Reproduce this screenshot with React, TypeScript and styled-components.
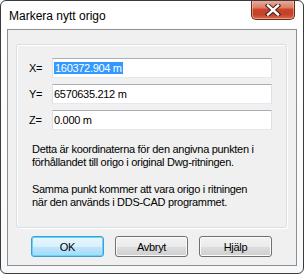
import React from "react"
import styled, { createGlobalStyle } from "styled-components"

const GlobalStyle = createGlobalStyle`
    html, body {
        margin: 0;
        padding: 0;
        background: #ffffff;
    }
    body {
        font-family: "Liberation Sans", Arial, sans-serif;
    }
`

const App = () => {
    return <>
        <GlobalStyle />
        <Window>
            <TitleBar>
                <Title>Markera nytt origo</Title>
                <CloseButton>
                    <svg width="16" height="12" viewBox="0 0 16 12">
                        <path d="M3 1.5 L13 10.5 M13 1.5 L3 10.5" stroke="#4a1c14" strokeWidth="4.4" strokeLinecap="square" fill="none" />
                        <path d="M3 1.5 L13 10.5 M13 1.5 L3 10.5" stroke="#ffffff" strokeWidth="2.4" strokeLinecap="square" fill="none" />
                    </svg>
                </CloseButton>
            </TitleBar>
            <Client>
                <GroupBox>
                    <Fields>
                        <FieldLabel>X=</FieldLabel>
                        <TextBox><Selected>160372.904 m</Selected></TextBox>
                        <FieldLabel>Y=</FieldLabel>
                        <TextBox>6570635.212 m</TextBox>
                        <FieldLabel>Z=</FieldLabel>
                        <TextBox>0.000 m</TextBox>
                    </Fields>
                    <Info>
                        Detta är koordinaterna för den angivna punkten i<br />
                        förhållandet till origo i original Dwg-ritningen.
                    </Info>
                    <Info>
                        Samma punkt kommer att vara origo i ritningen<br />
                        när den används i DDS-CAD programmet.
                    </Info>
                </GroupBox>
                <ButtonRow>
                    <DialogButton $isDefault>OK</DialogButton>
                    <DialogButton>Avbryt</DialogButton>
                    <DialogButton>Hjälp</DialogButton>
                </ButtonRow>
            </Client>
        </Window>
    </>
}

export default App

const Window = styled.div`
    width: 304px;
    height: 274px;
    box-sizing: border-box;
    border: 1px solid #3b3b3b;
    border-radius: 6px;
    background: linear-gradient(#ffffff, #f7f8fa);
    display: flex;
    flex-direction: column;
    overflow: hidden;
`

const TitleBar = styled.div`
    height: 28px;
    display: flex;
    align-items: flex-start;
    justify-content: space-between;
    padding: 0 8px 0 8px;
`

const Title = styled.div`
    font-family: "Liberation Sans", Arial, sans-serif;
    font-size: 12px;
    color: #000000;
    margin-top: 8px;
`

const CloseButton = styled.div`
    width: 42px;
    height: 19px;
    margin-top: -1px;
    border: 1px solid #6b2a1c;
    border-top: none;
    border-radius: 0 0 5px 5px;
    background: linear-gradient(#eab2a4 0%, #dc7d66 40%, #c9452c 50%, #c34128 75%, #d66c50 100%);
    box-shadow: inset 0 0 0 1px rgba(255, 210, 195, 0.5);
    display: flex;
    align-items: center;
    justify-content: center;
`

const Client = styled.div`
    flex: 1;
    margin: 0 6px 7px 6px;
    border: 1px solid #8e8f8f;
    background: #f0f0f0;
    padding: 14px 9px 0 8px;
    display: flex;
    flex-direction: column;
    letter-spacing: -0.3px;
`

const GroupBox = styled.div`
    height: 184px;
    box-sizing: border-box;
    border: 1px solid #d5dfe5;
    border-radius: 3px;
    box-shadow: 1px 1px 0 #ffffff, inset 1px 1px 0 #ffffff;
    padding: 13px 0 0 12px;
`

const Fields = styled.div`
    display: grid;
    grid-template-columns: 23px 220px;
    grid-auto-rows: 20px;
    row-gap: 6px;
    align-items: center;
`

const FieldLabel = styled.div`
    font-size: 11px;
    color: #000000;
`

const TextBox = styled.div`
    height: 20px;
    box-sizing: border-box;
    background: #ffffff;
    border: 1px solid #dbdfe6;
    border-top-color: #abadb3;
    border-bottom-color: #e3e9ef;
    font-size: 11px;
    color: #000000;
    padding: 2px 0 0 1px;
    line-height: 14px;
`

const Selected = styled.span`
    background: #3399ff;
    color: #ffffff;
    padding: 0 1px;
`

const Info = styled.p`
    margin: 13px 0 0 3px;
    font-size: 11px;
    line-height: 13px;
    color: #000000;

    & + & {
        margin-top: 14px;
    }
`

const ButtonRow = styled.div`
    display: flex;
    justify-content: center;
    gap: 11px;
    margin-top: 8px;
`

const DialogButton = styled.div<{ $isDefault?: boolean }>`
    width: 73px;
    height: 21px;
    box-sizing: border-box;
    border-radius: 3px;
    border: 1px solid ${({ $isDefault }) => $isDefault ? "#3c9fd9" : "#707070"};
    background: ${({ $isDefault }) => $isDefault
        ? "linear-gradient(#eaf6fd 0%, #d9f0fc 50%, #bee6fd 51%, #a7d9f5 100%)"
        : "linear-gradient(#f2f2f2 0%, #ebebeb 50%, #dddddd 51%, #cfcfcf 100%)"};
    box-shadow: ${({ $isDefault }) => $isDefault
        ? "inset 0 0 0 1px #5fd6fb"
        : "inset 0 0 0 1px #fbfbfb"};
    font-size: 11px;
    color: #000000;
    display: flex;
    align-items: center;
    justify-content: center;
`
